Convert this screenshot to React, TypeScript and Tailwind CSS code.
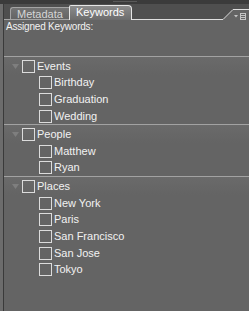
import React from "react";

const groups: { name: string; items: string[] }[] = [
  { name: "Events", items: ["Birthday", "Graduation", "Wedding"] },
  { name: "People", items: ["Matthew", "Ryan"] },
  { name: "Places", items: ["New York", "Paris", "San Francisco", "San Jose", "Tokyo"] },
];

function Box() {
  return <div className="w-[13px] h-[13px] border border-[#dcdcdc] shrink-0" />;
}

export default function App() {
  return (
    <div
      className="w-[249px] h-[311px] bg-[#646464] flex flex-col overflow-hidden"
      style={{ fontFamily: '"Liberation Sans", Arial, sans-serif' }}
    >
      <div className="h-[4px] bg-[#3b3b3b] shrink-0 flex justify-center">
        <div className="w-[24px] h-[1px] mt-[1px] bg-[#5a5a5a]" />
      </div>
      <div className="flex flex-1">
        <div className="w-[3px] bg-[#6c6c6c] shrink-0" />
        <div className="w-[1px] bg-[#3a3a3a] shrink-0" />
        <div className="flex-1 flex flex-col">
          {/* tab strip */}
          <div className="h-[16px] bg-[#4f4f4f] relative flex items-end pl-[6px]">
            <svg className="absolute inset-0" width="245" height="16" viewBox="0 0 245 16">
              <polygon points="219,16 229,6 245,6 245,16" fill="#646464" />
              <polyline points="0,15.5 6,15.5" stroke="#a8a8a8" strokeWidth="1" fill="none" />
              <polyline points="128,15.5 219,15.5 229,5.5 245,5.5" stroke="#dedede" strokeWidth="1" fill="none" />
              <polygon points="230,11 234,11 232,13.5" fill="#c4c4c4" />
              <rect x="236.5" y="9.5" width="5" height="6" stroke="#c4c4c4" strokeWidth="1" fill="none" />
              <line x1="237" y1="11.5" x2="241" y2="11.5" stroke="#c4c4c4" strokeWidth="1" />
              <line x1="237" y1="13.5" x2="241" y2="13.5" stroke="#c4c4c4" strokeWidth="1" />
            </svg>
            <div className="relative h-[13px] w-[59px] border-t border-l border-b border-[#a4a4a4] rounded-tl-[3px] bg-gradient-to-b from-[#747474] to-[#646464] text-[11px] leading-[12px] text-[#d6d6d6] pl-[6px]">
              Metadata
            </div>
            <div className="relative h-[15px] w-[63px] border-t border-l border-r border-[#e6e6e6] rounded-tl-[2px] rounded-tr-[4px] bg-gradient-to-b from-[#8c8c8c] to-[#6c6c6c] text-[11px] leading-[13px] text-white pl-[6px]">
              Keywords
            </div>
          </div>
          {/* content */}
          <div className="flex flex-col">
            <div className="pl-[2px] pt-[1px] text-[10px] leading-[12px] text-[#f2f2f2] tracking-[-0.2px]">
              Assigned Keywords:
            </div>
            <div className="mt-[23px] flex flex-col">
              {groups.map((g) => (
                <div key={g.name} className="flex flex-col">
                  <div className="h-[18.5px] border-t border-[#a2a2a2] pt-[3px] bg-gradient-to-b from-[#6a6a6a] to-[#646464]">
                    <div className="h-[13px] flex items-center pl-[8px]">
                      <svg width="7" height="5" viewBox="0 0 7 5" className="shrink-0">
                        <polygon points="0,0 7,0 3.5,5" fill="#7e7e7e" />
                      </svg>
                      <div className="ml-[3px]">
                        <Box />
                      </div>
                      <span className="ml-[2px] text-[11px] leading-[13px] text-[#f2f2f2]">{g.name}</span>
                    </div>
                  </div>
                  {g.items.map((it) => (
                    <div key={it} className="h-[16.67px] flex items-center pl-[35px]">
                      <Box />
                      <span className="ml-[2px] text-[11px] leading-[13px] text-[#f2f2f2]">{it}</span>
                    </div>
                  ))}
                </div>
              ))}
            </div>
          </div>
        </div>
      </div>
    </div>
  );
}
